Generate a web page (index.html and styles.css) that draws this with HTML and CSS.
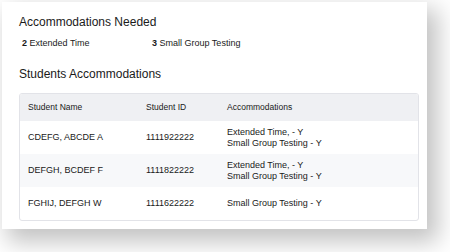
FILE: index.html
```html
<!DOCTYPE html>
<html lang="en">
<head>
    <meta charset="UTF-8">
    <meta name="viewport" content="width=device-width, initial-scale=1.0">
    <title>Accommodations</title>
    <link rel="stylesheet" href="styles.css">
</head>
<body>
    <div class="card">
        <h2 class="title">Accommodations Needed</h2>
        <div class="summary">
            <div class="summary-item"><b>2</b> Extended Time</div>
            <div class="summary-item"><b>3</b> Small Group Testing</div>
        </div>

        <h2 class="title">Students Accommodations</h2>
        <div class="table-box">
            <table class="students">
                <thead>
                    <tr>
                        <th class="col-name">Student Name</th>
                        <th class="col-id">Student ID</th>
                        <th>Accommodations</th>
                    </tr>
                </thead>
                <tbody>
                    <tr>
                        <td>CDEFG, ABCDE A</td>
                        <td>1111922222</td>
                        <td>Extended Time, - Y<br>Small Group Testing - Y</td>
                    </tr>
                    <tr>
                        <td>DEFGH, BCDEF F</td>
                        <td>1111822222</td>
                        <td>Extended Time, - Y<br>Small Group Testing - Y</td>
                    </tr>
                    <tr>
                        <td>FGHIJ, DEFGH W</td>
                        <td>1111622222</td>
                        <td>Small Group Testing - Y</td>
                    </tr>
                </tbody>
            </table>
        </div>
    </div>
</body>
</html>
```

FILE: styles.css
```css
body {
    margin: 0;
    height: 252px;
    overflow: hidden;
    background-color: #fff;
    font-family: "Liberation Sans", Arial, sans-serif;
    color: #1a1a1a;
}

.card {
    width: 400px;
    height: 227px;
    margin: 2px 0 0 2px;
    padding: 0 8px 0 17px;
    background-color: #fff;
    box-shadow: 8px 10px 22px 3px rgba(0, 0, 0, 0.24);
    overflow: hidden;
}

.title {
    margin: 0;
    font-size: 12px;
    font-weight: normal;
    line-height: 15px;
}

.card > .title:first-child {
    padding-top: 13px;
}

.summary {
    display: flex;
    font-size: 9px;
    margin: 8px 0 19px 3px;
}

.summary-item {
    width: 130px;
}

.table-box {
    margin-top: 11px;
    border: 1px solid #e2e3e8;
    border-radius: 3px;
    overflow: hidden;
}

.students {
    width: 100%;
    border-collapse: collapse;
    font-size: 9px;
    line-height: 11px;
}

.students th {
    height: 27px;
    padding: 0 8px;
    text-align: left;
    font-size: 8.5px;
    font-weight: normal;
    background-color: #eff0f3;
}

.students .col-name {
    width: 102px;
}

.students .col-id {
    width: 65px;
}

.students td {
    height: 33px;
    padding: 0 8px;
}

.students tbody tr:nth-child(even) td {
    background-color: #f7f8fa;
}
```
